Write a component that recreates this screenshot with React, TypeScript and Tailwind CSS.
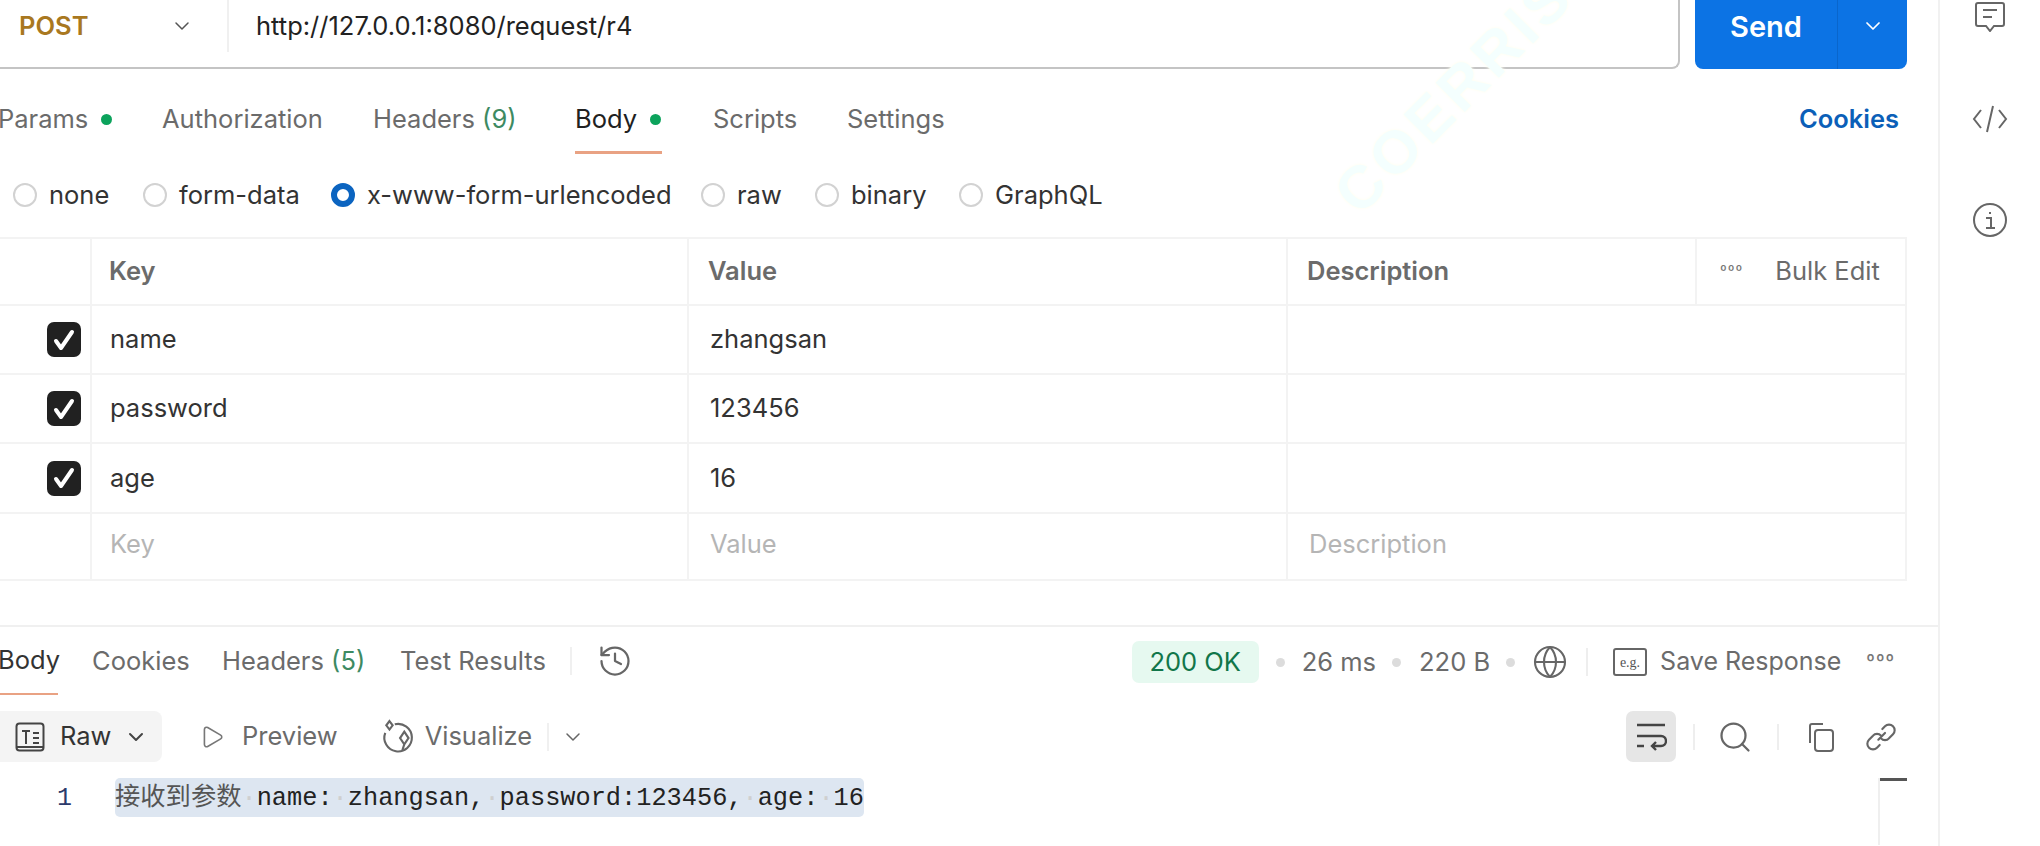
import { ChevronDown, History, Globe, Search, Play } from 'lucide-react';

const rows = [
  { key: 'name', value: 'zhangsan' },
  { key: 'password', value: '123456' },
  { key: 'age', value: '16' },
];

const cell = 'border-r-2 border-b-2 border-[#f3f3f3] flex items-center';

function Dot() {
  return <span className="w-[11px] h-[11px] rounded-full bg-[#0ca35c]" />;
}

function Radio({ label, on, w }: { label: string; on?: boolean; w: string }) {
  return (
    <div className={`flex items-center gap-[12px] ${w}`}>
      {on ? (
        <span className="w-[24px] h-[24px] rounded-full border-[6px] border-[#0b64c0] bg-white" />
      ) : (
        <span className="w-[24px] h-[24px] rounded-full border-2 border-[#d2d2d2] bg-white" />
      )}
      <span>{label}</span>
    </div>
  );
}

function Sep() {
  return <span className="text-[#cfcfcf]">·</span>;
}

export default function App() {
  return (
    <div className="relative flex w-[2040px] h-[846px] overflow-hidden bg-white font-['Inter',sans-serif] text-[25.5px] text-[#6b6b6b]">
      <main className="w-[1940px] shrink-0 border-r-2 border-[#f1f1f1]">
        {/* url bar */}
        <div className="flex h-[69px] items-stretch">
          <div className="flex-1 flex border-b-2 border-r-2 border-[#c4c4c4] rounded-br-[8px] w-[1680px] max-w-[1680px]">
            <div className="w-[229px] h-[52px] flex items-center justify-between pl-[19px] pr-[33px] border-r-2 border-[#f0f0f0]">
              <span className="font-semibold text-[#a9781f]">POST</span>
              <ChevronDown size={24} strokeWidth={1.5} className="text-[#555]" />
            </div>
            <div className="h-[52px] pl-[27px] flex items-center text-[#222]">http://127.0.0.1:8080/request/r4</div>
          </div>
          <div className="ml-[15px] w-[212px] flex bg-[#0c73e4] rounded-b-[8px] text-white">
            <div className="w-[143px] border-r border-[#0a66cc] flex items-center justify-center text-[29px] font-semibold pb-[16px]">Send</div>
            <div className="flex-1 flex items-center justify-center pb-[18px]">
              <ChevronDown size={24} strokeWidth={1.75} />
            </div>
          </div>
        </div>

        {/* request tabs */}
        <div className="flex items-start h-[84px] w-[1907px] pt-[33px] relative">
          <div className="flex items-center gap-[13px] -ml-[2px] w-[164px] h-[34px]"><span>Params</span><Dot /></div>
          <span className="w-[211px] h-[34px] leading-[34px]">Authorization</span>
          <span className="w-[202px] h-[34px] leading-[34px]">Headers <span className="text-[#3d8a62]">(9)</span></span>
          <div className="w-[138px]">
            <div className="flex items-center gap-[13px] text-[#212121] h-[34px] w-[87px] whitespace-nowrap"><span>Body</span><Dot /></div>
            <div className="h-[3px] w-[87px] mt-[15px] bg-[#e9a283]" />
          </div>
          <span className="w-[134px] h-[34px] leading-[34px]">Scripts</span>
          <span className="h-[34px] leading-[34px]">Settings</span>
          <span className="ml-auto mr-[8px] h-[34px] leading-[34px] font-semibold text-[#0b5fb8]">Cookies</span>
        </div>

        {/* body types */}
        <div className="flex items-center h-[84px] pl-[13px] text-[#333]">
          <Radio label="none" w="w-[130px]" />
          <Radio label="form-data" w="w-[188px]" />
          <Radio label="x-www-form-urlencoded" on w="w-[370px]" />
          <Radio label="raw" w="w-[114px]" />
          <Radio label="binary" w="w-[144px]" />
          <Radio label="GraphQL" w="w-[150px]" />
        </div>

        {/* params table */}
        <div className="grid grid-cols-[92px_597px_599px_409px_210px] w-[1907px] border-t-2 border-[#f3f3f3] grid-rows-[67px_69px_69px_70px_67px]">
          <div className={cell} />
          <div className={`${cell} pl-[17px] font-semibold`}>Key</div>
          <div className={`${cell} pl-[19px] font-semibold`}>Value</div>
          <div className={`${cell} pl-[19px] font-semibold`}>Description</div>
          <div className={`${cell} pl-[23px] gap-[32px]`}>
            <span className="text-[15px] tracking-[1px] text-[#777]">ººº</span>
            <span>Bulk Edit</span>
          </div>
          {rows.map(r => (
            <div key={r.key} className="contents">
              <div className={`${cell} justify-end pr-[9px]`}>
                <span className="w-[34px] h-[35px] rounded-[7px] bg-[#212121] flex items-center justify-center">
                  <svg width="24" height="24" viewBox="0 0 24 24" fill="none" stroke="#fff" strokeWidth="4" strokeLinecap="round" strokeLinejoin="round">
                    <path d="M4 13l5 7L20 4" />
                  </svg>
                </span>
              </div>
              <div className={`${cell} pl-[18px] text-[#333]`}>{r.key}</div>
              <div className={`${cell} pl-[21px] text-[#333]`}>{r.value}</div>
              <div className={`${cell} col-span-2`} />
            </div>
          ))}
          <div className={cell} />
          <div className={`${cell} pl-[18px] pb-[4px] text-[#b5b5b5]`}>Key</div>
          <div className={`${cell} pl-[21px] pb-[4px] text-[#b5b5b5]`}>Value</div>
          <div className={`${cell} pl-[21px] pb-[4px] text-[#b5b5b5] col-span-2`}>Description</div>
        </div>

        {/* response */}
        <div className="mt-[44px] border-t-2 border-[#f0f0f0] flex items-stretch h-[70px] relative">
          <div className="w-[92px] shrink-0">
            <div className="h-[66px] flex items-center -ml-[2px] text-[#333]">Body</div>
            <div className="h-[2px] w-[58px] bg-[#e9a283]" />
          </div>
          <div className="flex items-center h-[68px]">
            <span className="w-[130px]">Cookies</span>
            <span className="w-[178px]">Headers <span className="text-[#3d8a62]">(5)</span></span>
            <span className="w-[170px]">Test Results</span>
            <span className="w-[2px] h-[28px] bg-[#f0f0f0] mr-[25px]" />
            <History size={36} strokeWidth={1.5} className="text-[#666]" />
          </div>
          <div className="ml-auto mr-[43px] flex items-center h-[70px]">
            <span className="w-[127px] h-[42px] rounded-[7px] bg-[#e6f9f0] text-[#11764a] flex items-center justify-center">200 OK</span>
            <span className="w-[9px] h-[9px] rounded-full bg-[#dcdcdc] ml-[17px] mr-[17px]" />
            <span>26 ms</span>
            <span className="w-[9px] h-[9px] rounded-full bg-[#dcdcdc] ml-[16px] mr-[18px]" />
            <span>220 B</span>
            <span className="w-[9px] h-[9px] rounded-full bg-[#dcdcdc] ml-[16px] mr-[17px]" />
            <Globe size={36} strokeWidth={1.4} className="text-[#666]" />
            <span className="w-[2px] h-[28px] bg-[#eeeeee] ml-[18px] mr-[25px]" />
            <svg width="34" height="28" viewBox="0 0 34 28" fill="none" className="mr-[13px]">
              <rect x="1" y="1" width="32" height="26" rx="2" stroke="#666" strokeWidth="2" />
              <text x="17" y="19" textAnchor="middle" fontSize="14" fontFamily="'Liberation Serif', serif" fill="#555">e.g.</text>
            </svg>
            <span className="text-[25px]">Save Response</span>
            <span className="ml-[25px] text-[19px] tracking-[1px] text-[#777]">ººº</span>
          </div>
        </div>

        {/* response toolbar */}
        <div className="flex items-center h-[51px] mt-[16px] relative w-[1907px]">
          <div className="w-[162px] h-full rounded-r-[8px] bg-[#f4f4f4] flex items-center pl-[15px] text-[#333]">
            <svg width="30" height="30" viewBox="0 0 30 30" fill="none" stroke="#444" strokeWidth="2">
              <rect x="1.5" y="1.5" width="27" height="27" rx="3" />
              <path d="M7 9h8M11 9v13M18 11h6M18 16h6M18 21h6M2 25h26" />
            </svg>
            <span className="ml-[15px]">Raw</span>
            <ChevronDown size={24} strokeWidth={2} className="ml-[13px] text-[#444]" />
          </div>
          <Play size={26} strokeWidth={1.5} className="ml-[37px] text-[#777]" />
          <span className="ml-[17px]">Preview</span>
          <svg width="36" height="36" viewBox="0 0 34 34" fill="none" stroke="#666" strokeWidth="2" className="ml-[43px]">
            <path d="M13 5a13 13 0 1 1-9 8" />
            <path d="M8 2l3 4-3 4-3-4zM22 12l4 6-4 6-4-6zM20 30l2-6" />
          </svg>
          <span className="ml-[8px]">Visualize</span>
          <span className="w-[2px] h-[28px] bg-[#f0f0f0] ml-[15px]" />
          <ChevronDown size={24} strokeWidth={1.5} className="ml-[12px] text-[#666]" />
          <div className="ml-auto flex items-center h-full">
            <div className="w-[50px] h-full rounded-[7px] bg-[#e6e6e6] flex items-center justify-center">
              <svg width="32" height="30" viewBox="0 0 32 30" fill="none" stroke="#444" strokeWidth="2.4">
                <path d="M2 3h28M2 14h24a4 4 0 0 1 0 10h-8M2 24h7M21 20l-4 4 4 4" />
              </svg>
            </div>
            <span className="w-[2px] h-[26px] bg-[#eeeeee] ml-[17px]" />
            <Search size={36} strokeWidth={1.5} className="ml-[22px] text-[#666]" />
            <span className="w-[2px] h-[26px] bg-[#eeeeee] ml-[24px]" />
            <svg width="30" height="30" viewBox="0 0 30 30" fill="none" stroke="#666" strokeWidth="2" className="ml-[26px]">
              <path d="M5 21V4a2 2 0 0 1 2-2h11" />
              <rect x="10" y="8" width="18" height="21" rx="3" />
            </svg>
            <svg width="32" height="32" viewBox="0 0 24 24" fill="none" stroke="#666" strokeWidth="1.6" strokeLinecap="round" className="ml-[30px] mr-[10px]">
              <path d="M10 14l5-5M13 6l2-2a4.2 4.2 0 0 1 6 6l-3 3a4 4 0 0 1-6 0M11 18l-2 2a4.2 4.2 0 0 1-6-6l3-3a4 4 0 0 1 6 0" />
            </svg>
          </div>
        </div>

        {/* response text */}
        <div className="flex mt-[16px] relative w-[1907px] h-[67px]">
          <span className="w-[115px] shrink-0 pl-[57px] text-[#2c3a6b] font-['Liberation_Mono',monospace] text-[25px] leading-[41px]">1</span>
          <div className="h-[39px] w-[749px] rounded-[5px] bg-[#dde6f1] whitespace-pre text-[#222] font-['Liberation_Mono','Noto_Sans_CJK_SC',monospace] text-[25.3px] leading-[41px]">
            <span className="text-[#555]">接收到参数</span><Sep />name:<Sep />zhangsan,<Sep />password:123456,<Sep />age:<Sep />16
          </div>
          <div className="ml-auto w-[29px] border-l-2 border-[#efefef] h-full">
            <div className="h-[3px] bg-[#555]" />
          </div>
        </div>
      </main>

      {/* right rail */}
      <aside className="flex-1 flex flex-col items-center">
        <svg width="32" height="30" viewBox="0 0 32 30" fill="none" stroke="#666" strokeWidth="2" className="mt-[2px]">
          <path d="M2 3a2 2 0 0 1 2-2h24a2 2 0 0 1 2 2v19a2 2 0 0 1-2 2h-8l-4 5-4-5H4a2 2 0 0 1-2-2z" />
          <path d="M9 8h14M9 15h9" />
        </svg>
        <svg width="36" height="28" viewBox="0 0 36 28" fill="none" stroke="#666" strokeWidth="2" className="mt-[73px]">
          <path d="M9 5L2 14l7 9M27 5l7 9-7 9M21 1l-6 26" />
        </svg>
        <svg width="36" height="36" viewBox="0 0 36 36" fill="none" stroke="#666" strokeWidth="2" className="mt-[69px]">
          <circle cx="18" cy="18" r="16" />
          <path d="M14 16h5v10M14 26h9M18 10v2" />
        </svg>
      </aside>

      {/* watermark */}
      <div className="absolute left-[1293px] top-[32px] -rotate-[45deg] text-[60px] font-bold tracking-[5px] font-['Liberation_Sans',sans-serif] text-[#f4fffe] [text-shadow:0_0_2px_#fffff2,0_0_4px_#fffff2] pointer-events-none">COERRISK</div>
    </div>
  );
}
